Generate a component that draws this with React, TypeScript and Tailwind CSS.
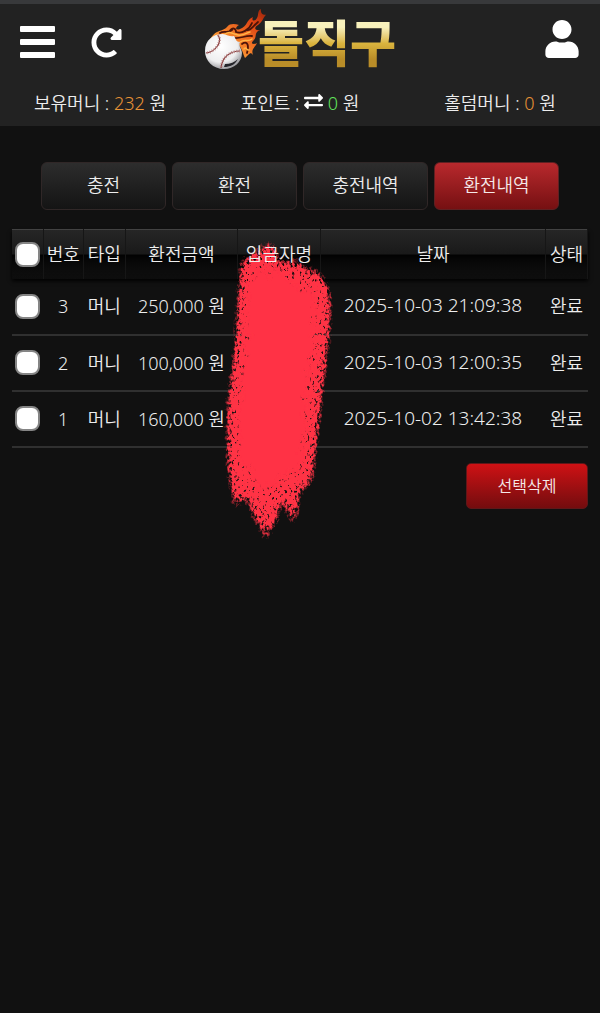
import { FaExchangeAlt, FaRedoAlt, FaUser } from "react-icons/fa";

const rows = [
  { id: 3, type: "머니", amount: "250,000 원", date: "2025-10-03 21:09:38", status: "완료" },
  { id: 2, type: "머니", amount: "100,000 원", date: "2025-10-03 12:00:35", status: "완료" },
  { id: 1, type: "머니", amount: "160,000 원", date: "2025-10-02 13:42:38", status: "완료" },
];

const tabs = ["충전", "환전", "충전내역", "환전내역"];

const columns = [
  { label: "번호", width: "w-[7%]" },
  { label: "타입", width: "w-[7.3%]" },
  { label: "환전금액", width: "w-[19.5%]" },
  { label: "입금자명", width: "w-[14.4%]" },
  { label: "날짜", width: "w-[39.1%]" },
  { label: "상태", width: "w-[7.3%]" },
];

function BallLogo() {
  return (
    <svg viewBox="0 0 62 62" className="h-[62px] w-[62px] shrink-0" aria-hidden="true">
      <defs>
        <linearGradient id="flame" x1="0" y1="1" x2="1" y2="0">
          <stop offset="0" stopColor="#ffc04a" />
          <stop offset="0.4" stopColor="#f5822a" />
          <stop offset="0.75" stopColor="#df4313" />
          <stop offset="1" stopColor="#8c2109" />
        </linearGradient>
        <radialGradient id="ball" cx="0.42" cy="0.35" r="0.65">
          <stop offset="0" stopColor="#ffffff" />
          <stop offset="0.7" stopColor="#eeeeef" />
          <stop offset="1" stopColor="#a2a2a6" />
        </radialGradient>
      </defs>
      <path
        d="M6 32 C11 21 19 24 23 19 C26 15 31 16 35 17 C31 19 31 23 36 21 C44 18 42 12 49 9 C47 13 51 14 53 10 C55 7 53 3 57 1 C56 6 60 8 63 6 C59 9 59 14 54 17 C50 19 50 23 56 22 C49 25 54 29 49 33 C46 36 50 37 53 35 C50 41 47 41 49 47 C46 43 45 47 41 50 C39 46 38 40 34 36 C26 29 18 27 6 32Z"
        fill="url(#flame)"
      />
      <path
        d="M16 25 C20 22 24 26 28 22 M25 24 C29 18 32 21 32 24 C38 26 45 22 48 15 M30 30 C36 31 42 27 48 28 M38 36 C44 32 45 38 43 45 M43 22 C47 23 49 18 54 14"
        fill="none"
        stroke="#4d1408"
        strokeWidth="1.8"
        strokeLinecap="round"
      />
      <path
        d="M20 27 C26 22 28 26 34 27 C40 28 42 25 46 24 M36 34 C42 30 43 35 48 31 M40 41 C43 38 42 43 45 42"
        fill="none"
        stroke="#ffb548"
        strokeWidth="1.5"
        strokeLinecap="round"
      />
      <path
        d="M1 43 C1 32 9 26 19 26 C24 27 26 29 30 28 C32 31 32 34 36 34 C34 38 38 41 38 45 C38 54 30 61 20 61 C9 61 1 53 1 43Z"
        fill="url(#ball)"
      />
      <path d="M14 27 C19 34 11 44 2 45" fill="none" stroke="#85383a" strokeWidth="1.2" />
      <path d="M14 27 C19 34 11 44 2 45" fill="none" stroke="#b98583" strokeWidth="3" strokeDasharray="0.8 1.8" />
      <path d="M36 43 C26 43 18 49 17 60" fill="none" stroke="#85383a" strokeWidth="1.2" />
      <path d="M36 43 C26 43 18 49 17 60" fill="none" stroke="#b98583" strokeWidth="3" strokeDasharray="0.8 1.8" />
      <path d="M21 56 C26 56 31 54 34 51 C31 57 26 59 20 59Z" fill="#25252a" />
    </svg>
  );
}

function Scribble() {
  return (
    <svg viewBox="0 0 130 310" className="h-[310px] w-[130px]" aria-hidden="true">
      <defs>
        <filter id="brush" x="-20%" y="-10%" width="140%" height="120%" colorInterpolationFilters="sRGB">
          <feGaussianBlur in="SourceAlpha" stdDeviation="4 6" result="soft" />
          <feTurbulence type="fractalNoise" baseFrequency="0.4 0.28" numOctaves="3" seed="8" result="grain" />
          <feColorMatrix
            in="grain"
            type="matrix"
            values="0 0 0 0 0  0 0 0 0 0  0 0 0 0 0  2 0 0 0 -0.5"
            result="grainAlpha"
          />
          <feComposite in="soft" in2="grainAlpha" operator="arithmetic" k1="1.6" k2="0.25" result="mix" />
          <feComponentTransfer in="mix" result="edge">
            <feFuncA type="linear" slope="2.4" intercept="-0.45" />
          </feComponentTransfer>
          <feGaussianBlur in="edge" stdDeviation="0.4" result="smooth" />
          <feFlood floodColor="#ff3345" />
          <feComposite in2="smooth" operator="in" />
        </filter>
        <filter id="core" x="-20%" y="-10%" width="140%" height="120%">
          <feTurbulence type="fractalNoise" baseFrequency="0.12" numOctaves="3" seed="3" />
          <feDisplacementMap in="SourceGraphic" scale="22" xChannelSelector="R" yChannelSelector="G" />
          <feGaussianBlur stdDeviation="1.2" />
        </filter>
      </defs>
      <path
        filter="url(#brush)"
        d="M27 40 L27 25 L34 32 L39 17 L44 28 L49 11 L53 17 L57 10 L61 26 L65 40 L70 26 L76 35 L83 27 L87 39 L96 38 L104 43 L110 52 L114 68 L113 92 L110 123 L106 153 L103 183 L99 213 L96 245 L90 254 L83 252 L81 282 L76 290 L73 260 L68 276 L64 260 L60 288 L54 294 L50 310 L46 280 L41 292 L36 264 L30 267 L25 258 L20 280 L18 254 L15 235 L14 205 L14 175 L18 143 L22 113 L24 78Z"
      />
      <path
        filter="url(#core)"
        fill="#ff3345"
        d="M34 46 L50 35 L78 50 L98 60 L101 85 L97 123 L91 160 L89 200 L84 238 L70 242 L52 256 L38 242 L27 230 L23 200 L25 165 L30 120Z"
      />
    </svg>
  );
}

const checkboxClass =
  "mx-auto block size-[25px] appearance-none rounded-lg border-2 border-[#858585] bg-white checked:bg-[#c01b1b]";

export default function App() {
  return (
    <div className="min-h-screen bg-[#111111] font-['Noto_Sans','Noto_Sans_CJK_KR',sans-serif] text-lg font-[350] text-[#eeeeee]">
      <header className="border-t-4 border-[#38393b] bg-[#222222]">
        <div className="relative flex h-[76px] items-center justify-between pr-[21px] pl-5">
          <div className="flex items-center gap-9">
            <button type="button" aria-label="메뉴">
              <svg viewBox="0 0 35 32" className="h-8 w-[35px]" fill="#ffffff" aria-hidden="true">
                <rect y="0" width="35" height="6" rx="1" />
                <rect y="13" width="35" height="6" rx="1" />
                <rect y="26" width="35" height="6" rx="1" />
              </svg>
            </button>
            <button type="button" aria-label="새로고침" className="text-white">
              <FaRedoAlt className="size-[31px]" />
            </button>
          </div>
          <a
            href="#"
            aria-label="돌직구"
            className="absolute top-1 left-1/2 flex -translate-x-1/2 items-start"
          >
            <BallLogo />
            <span className="-ml-2 bg-linear-to-b from-[#f8f1bc] from-30% via-[#dbb53e] via-55% to-[#b98d28] to-80% bg-clip-text font-['Noto_Sans_CJK_KR',sans-serif] text-[50px] leading-[64px] font-black text-transparent">
              돌직구
            </span>
          </a>
          <button type="button" aria-label="내 정보" className="-mt-1.5 text-white">
            <FaUser className="h-[38px] w-[34px]" />
          </button>
        </div>
        <div className="grid h-[46px] grid-cols-3 items-center text-center leading-6 whitespace-nowrap">
          <p>
            보유머니 : <span className="text-[#e89336]">232</span> 원
          </p>
          <p>
            포인트 :{" "}
            <button type="button" aria-label="포인트 전환" className="align-[-1px] text-white">
              <FaExchangeAlt className="size-[19px]" />
            </button>{" "}
            <span className="text-[#61e45c]">0</span> 원
          </p>
          <p>
            홀덤머니 : <span className="text-[#e89336]">0</span> 원
          </p>
        </div>
      </header>

      <main className="px-3 pt-9">
        <nav className="flex gap-1.5 px-[29px]">
          {tabs.map((tab, i) => (
            <button
              key={tab}
              type="button"
              className={
                i === 3
                  ? "h-12 flex-1 rounded-md border border-[#602022] bg-linear-to-b from-[#b9292d] to-[#761012] pb-0.5 text-[#f5e9e9]"
                  : "h-12 flex-1 rounded-md border border-[#302727] bg-linear-to-b from-[#2d2d2d] to-[#141414] pb-0.5"
              }
            >
              {tab}
            </button>
          ))}
        </nav>

        <div className="relative mt-[19px]">
          <table className="w-full table-fixed border-collapse text-center whitespace-nowrap">
            <thead>
              <tr className="h-[49px] bg-linear-to-b from-[#262626] from-0% via-[#191919] via-50% to-[#0d0d0d] to-100% shadow-[0_2px_4px_#000000]">
                <th className="w-[5.4%] border-t border-r border-t-[#424242] border-r-[#161616] bg-linear-to-b from-transparent from-50% via-[#020202] via-50% to-transparent p-0">
                  <input type="checkbox" aria-label="전체 선택" className={checkboxClass} />
                </th>
                {columns.map((c) => (
                  <th
                    key={c.label}
                    className={`${c.width} border-t border-r border-t-[#424242] border-r-[#161616] bg-linear-to-b from-transparent from-50% via-[#020202] via-50% to-transparent p-0 font-[350]`}
                  >
                    <span className="relative z-10">{c.label}</span>
                  </th>
                ))}
              </tr>
            </thead>
            <tbody>
              {rows.map((r) => (
                <tr key={r.id} className="h-14 border-b-2 border-[#303030]">
                  <td className="p-0">
                    <input type="checkbox" aria-label={`${r.id}번 선택`} className={checkboxClass} />
                  </td>
                  <td>{r.id}</td>
                  <td>{r.type}</td>
                  <td>{r.amount}</td>
                  <td></td>
                  <td className="text-[19px]">{r.date}</td>
                  <td>{r.status}</td>
                </tr>
              ))}
            </tbody>
          </table>
          <div className="pointer-events-none absolute top-1 left-[203px]">
            <Scribble />
          </div>
        </div>

        <div className="mt-[15px] flex justify-end">
          <button
            type="button"
            className="h-[46px] w-[122px] rounded-[5px] border border-[#601719] bg-linear-to-b from-[#cf1114] to-[#740c0e] text-base text-[#f5e9e9]"
          >
            선택삭제
          </button>
        </div>
      </main>
    </div>
  );
}
